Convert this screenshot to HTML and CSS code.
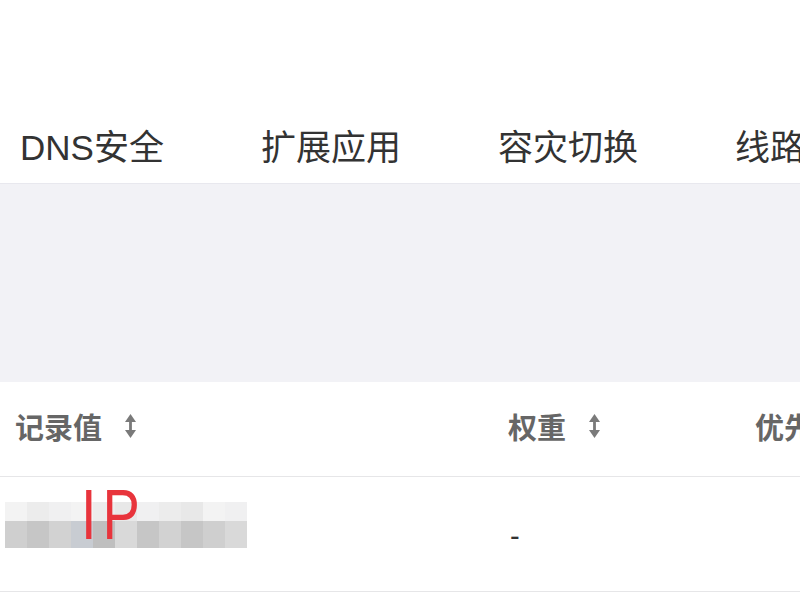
FILE: index.html
```html
<!DOCTYPE html>
<html lang="zh-CN">
<head>
<meta charset="utf-8">
<link rel="stylesheet" href="styles.css">
</head>
<body>
<div class="top"></div>
<nav class="tabs">
  <span class="tab">DNS安全</span>
  <span class="tab">扩展应用</span>
  <span class="tab">容灾切换</span>
  <span class="tab">线路管理</span>
</nav>
<div class="band"></div>
<div class="table">
  <div class="row head">
    <div class="cell c1">记录值 <svg class="sort" viewBox="0 0 12 28"><path d="M6 2 L11.5 10 L7.4 10 L7.4 18 L11.5 18 L6 26 L0.5 18 L4.6 18 L4.6 10 L0.5 10 Z" fill="#7a7a7a"/></svg></div>
    <div class="cell c2">权重 <svg class="sort" viewBox="0 0 12 28"><path d="M6 2 L11.5 10 L7.4 10 L7.4 18 L11.5 18 L6 26 L0.5 18 L4.6 18 L4.6 10 L0.5 10 Z" fill="#7a7a7a"/></svg></div>
    <div class="cell c3">优先级</div>
  </div>
  <div class="row body">
    <div class="cell c1">
      <div class="mosaic">
        <div class="mrow up">
          <span class="b a1"></span><span class="b a2"></span><span class="b a3"></span><span class="b a1"></span><span class="b a2"></span><span class="b a4"></span><span class="b a3"></span><span class="b a2"></span><span class="b a4"></span><span class="b a1"></span><span class="b a3"></span>
        </div>
        <div class="mrow down">
          <span class="b d1"></span><span class="b d2"></span><span class="b d3"></span><span class="b d4"></span><span class="b d5"></span><span class="b d6"></span><span class="b d2"></span><span class="b d3"></span><span class="b d2"></span><span class="b d1"></span><span class="b d6"></span>
        </div>
        <span class="ip">IP</span>
      </div>
    </div>
    <div class="cell c2 dash">-</div>
    <div class="cell c3"></div>
  </div>
</div>
</body>
</html>
```
FILE: styles.css
```css
html, body {
  margin: 0;
  padding: 0;
  background: #fff;
  font-family: "Liberation Sans", "Noto Sans CJK SC", sans-serif;
  overflow: hidden;
}
.top {
  height: 106px;
}
.tabs {
  height: 77px;
  display: flex;
  align-items: center;
  gap: 97px;
  padding-left: 20px;
  white-space: nowrap;
  border-bottom: 1px solid #e8e8ee;
}
.tab {
  font-size: 35px;
  color: #333;
}
.band {
  height: 198px;
  background: #f2f2f6;
}
.row {
  display: grid;
  grid-template-columns: 493px 247px 1fr;
  padding-left: 15px;
  border-bottom: 1px solid #e6e6e8;
  white-space: nowrap;
}
.head {
  height: 94px;
  align-items: center;
}
.head .cell {
  font-size: 29px;
  color: #666;
  font-weight: 600;
  display: flex;
  align-items: center;
  padding-bottom: 6px;
}
.sort {
  flex: none;
  width: 13px;
  height: 28px;
  margin-left: 22px;
}
.body {
  height: 114px;
  align-items: center;
}
.dash {
  font-size: 29px;
  color: #333;
  padding-top: 4px;
  padding-left: 2px;
}
.mosaic {
  position: relative;
  width: 243px;
  margin-left: -10px;
  margin-top: -28px;
  padding-top: 10px;
}
.mrow {
  display: flex;
}
.up { height: 19px; }
.down { height: 27px; }
.b { width: 22px; flex: none; }
.a1 { background: #f3f3f3; }
.a2 { background: #ececec; }
.a3 { background: #f0f0f1; }
.a4 { background: #e8e8e8; }
.d1 { background: #cfcfcf; }
.d2 { background: #c6c6c6; }
.d3 { background: #d2d2d2; }
.d4 { background: #c8ccd2; }
.d5 { background: #bfbfbf; }
.d6 { background: #d9d9d9; }
.ip {
  position: absolute;
  left: 76px;
  top: -12px;
  font-size: 56px;
  line-height: 1;
  color: #e8343c;
  transform: scaleY(1.25);
  transform-origin: top left;
  letter-spacing: 6px;
}
```
